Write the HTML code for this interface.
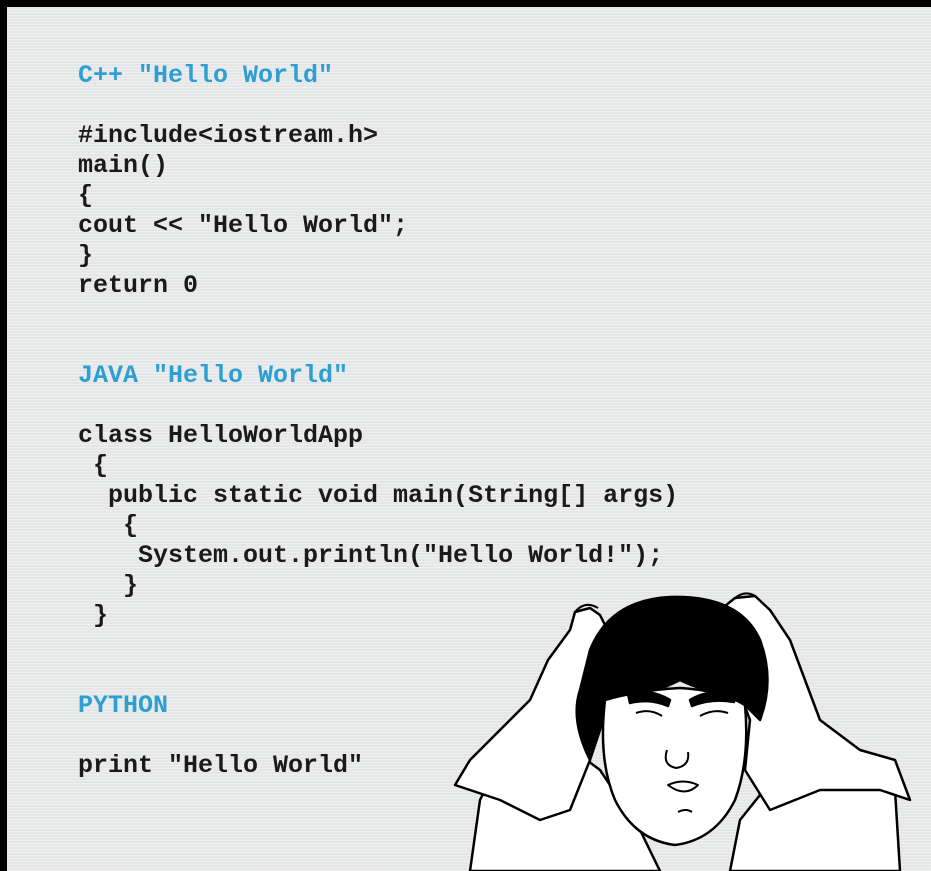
<!DOCTYPE html>
<html><head><meta charset="utf-8"><style>
html,body{margin:0;padding:0;}
body{width:931px;height:871px;background:#000;position:relative;overflow:hidden;}
.bg{position:absolute;left:7px;top:7px;width:924px;height:864px;background:#e5e6e7;
background-image:repeating-linear-gradient(0deg,rgba(255,255,255,.35) 0 1px,transparent 1px 3px);}
pre{position:absolute;left:78px;top:61px;margin:0;font-family:"Liberation Mono",monospace;font-weight:bold;font-size:25px;line-height:30px;color:#1a1a1a;}
.b{color:#2d9fd2;}
svg{position:absolute;left:0;top:0;}
</style></head><body>
<div class="bg"></div>
<pre><span class="b">C++ "Hello World"</span>

#include&lt;iostream.h&gt;
main()
{
cout &lt;&lt; "Hello World";
}
return 0


<span class="b">JAVA "Hello World"</span>

class HelloWorldApp
 {
  public static void main(String[] args)
   {
    System.out.println("Hello World!");
   }
 }


<span class="b">PYTHON</span>

print "Hello World"</pre>
<svg width="931" height="871" viewBox="0 0 931 871" fill="none" stroke="#000" stroke-width="2.5" stroke-linejoin="round">
<path d="M470 871 L480 800 L500 760 L560 740 L600 770 L640 830 L660 871 Z" fill="#fff"/>
<path d="M895 790 L880 760 L820 740 L780 770 L740 820 L730 871 L900 871 Z" fill="#fff"/>
<path d="M455 785 L470 760 L490 740 L530 700 L548 660 L570 630 L575 612 L590 608 L600 615 L605 625 L615 640 L600 670 L580 720 L590 760 L570 810 L540 820 L500 800 Z" fill="#fff"/>
<path d="M720 610 L735 598 L755 596 L770 610 L790 640 L805 680 L820 720 L860 750 L895 760 L910 800 L880 790 L820 790 L770 810 L745 770 L750 720 L735 680 L725 650 Z" fill="#fff"/>
<path d="M590 650 Q610 600 670 597 Q740 595 760 640 Q775 680 760 720 L740 700 Q700 690 680 680 Q640 700 610 700 L590 760 Q570 720 580 690 Z" fill="#000"/>
<path d="M605 700 Q640 690 680 688 Q720 690 745 705 Q750 760 735 800 Q715 840 675 845 Q635 840 615 800 Q598 760 605 700 Z" fill="#fff"/>
<path d="M628 694 Q650 688 670 700 L668 706 Q650 698 630 703 Z" fill="#000"/>
<path d="M690 700 Q710 688 735 694 L734 702 Q712 698 692 706 Z" fill="#000"/>
<path d="M636 713 Q650 708 662 716" stroke-width="2"/>
<path d="M700 716 Q714 708 728 713" stroke-width="2"/>
<path d="M667 750 Q662 765 676 768 Q690 766 688 752" stroke-width="2"/>
<path d="M668 785 Q683 778 698 785 Q685 798 668 785 Z" stroke-width="2"/>
<path d="M678 812 Q686 808 692 812" stroke-width="2"/>
<path d="M575 612 Q585 600 598 608" stroke-width="2"/>
<path d="M735 598 Q745 590 755 596" stroke-width="2"/>
</svg>
</body></html>
